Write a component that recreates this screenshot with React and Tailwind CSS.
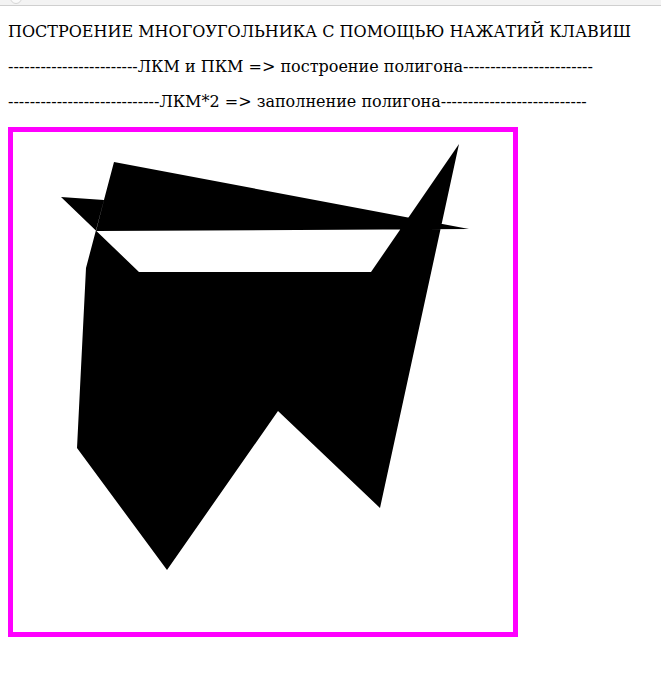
import React from 'react';

// вершины полигона в координатах холста 500x500 (порядок кликов)
const points = [
    [48, 65], [126, 140], [358, 140], [446, 12], [367, 376], [265, 279],
    [154, 438], [64, 316], [73, 136], [101, 30], [456, 97], [83, 99], [91, 68],
];

const dashes = (n) => '-'.repeat(n);

export default function App() {
    return (
        <div className="min-h-screen bg-white text-black" style={{ fontFamily: '"DejaVu Serif", "Liberation Serif", serif' }}>
            <div className="h-[6px] bg-[#f3f3f3] border-b border-[#cfcfcf] relative overflow-hidden">
                <div className="absolute left-[10px] -top-[10px] w-[12px] h-[14px] rounded-full border border-[#d6d6d6] bg-[#fafafa]" />
            </div>
            <div className="px-2">
                <p className="mt-4 text-base leading-[19px]">ПОСТРОЕНИЕ МНОГОУГОЛЬНИКА С ПОМОЩЬЮ НАЖАТИЙ КЛАВИШ</p>
                <p className="mt-4 text-base leading-[19px]">{dashes(24)}ЛКМ и ПКМ =&gt; построение полигона{dashes(24)}</p>
                <p className="mt-4 text-base leading-[19px]">{dashes(28)}ЛКМ*2 =&gt; заполнение полигона{dashes(27)}</p>
                <div className="mt-4 w-[510px] h-[510px] border-[5px] border-[#ff00ff] bg-white">
                    <svg width="500" height="500" viewBox="0 0 500 500" className="block">
                        <polygon points={points.map((p) => p.join(',')).join(' ')} fill="#000" fillRule="nonzero" />
                    </svg>
                </div>
            </div>
        </div>
    );
}
